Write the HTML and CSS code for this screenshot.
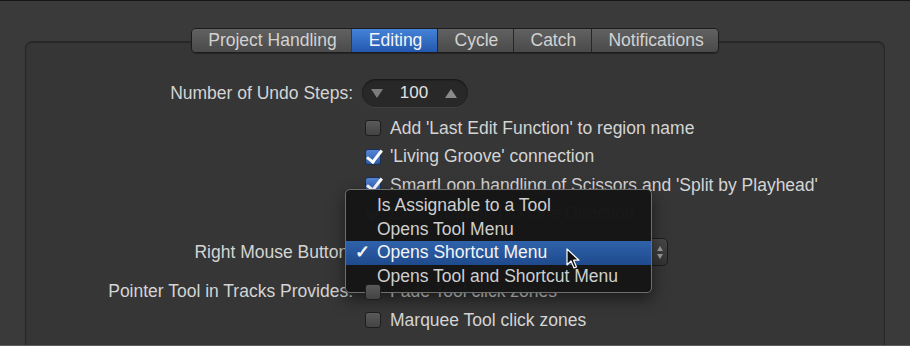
FILE: index.html
```html
<!DOCTYPE html>
<html lang="en">
<head>
    <meta charset="UTF-8">
    <meta name="viewport" content="width=device-width, initial-scale=1.0">
    <title>Preferences - Editing</title>
    <link rel="stylesheet" href="styles.css">
</head>
<body>
    <div class="window">
        <div class="panel">
            <div class="tabs">
                <div class="tab">Project Handling</div>
                <div class="tab active">Editing</div>
                <div class="tab">Cycle</div>
                <div class="tab">Catch</div>
                <div class="tab">Notifications</div>
            </div>

            <div class="form">
                <div class="row row-undo">
                    <div class="label">Number of Undo Steps:</div>
                    <div class="stepper">
                        <span class="tri down"></span>
                        <span class="value">100</span>
                        <span class="tri up"></span>
                    </div>
                </div>

                <div class="row row-first">
                    <div class="label"></div>
                    <label class="check"><span class="box"></span>Add 'Last Edit Function' to region name</label>
                </div>
                <div class="row">
                    <div class="label"></div>
                    <label class="check"><span class="box checked"></span>'Living Groove' connection</label>
                </div>
                <div class="row">
                    <div class="label"></div>
                    <label class="check"><span class="box checked"></span>SmartLoop handling of Scissors and 'Split by Playhead'</label>
                </div>
                <div class="row">
                    <div class="label"></div>
                    <label class="check"><span class="box checked"></span>Limit Dragging to One Direction</label>
                </div>

                <div class="row row-popup">
                    <div class="label">Right Mouse Button:</div>
                    <div class="popup">
                        <span class="popup-text">Opens Shortcut Menu</span>
                        <span class="popup-arrows">
                            <span class="tri up small"></span>
                            <span class="tri down small"></span>
                        </span>

                        <!-- open menu lies over the rows around it -->
                        <ul class="menu">
                            <li>Is Assignable to a Tool</li>
                            <li>Opens Tool Menu</li>
                            <li class="selected">Opens Shortcut Menu</li>
                            <li>Opens Tool and Shortcut Menu</li>
                        </ul>
                        <svg class="cursor" width="14" height="22" viewBox="0 0 14 22">
                            <path d="M1 1 L1 17 L5 13 L8 20 L10.5 19 L7.6 12.2 L13 12.2 Z" fill="#111" stroke="#fff" stroke-width="1.2" stroke-linejoin="round"/>
                        </svg>
                    </div>
                </div>

                <div class="row row-pointer">
                    <div class="label">Pointer Tool in Tracks Provides:</div>
                    <label class="check"><span class="box"></span>Fade Tool click zones</label>
                </div>
                <div class="row">
                    <div class="label"></div>
                    <label class="check"><span class="box"></span>Marquee Tool click zones</label>
                </div>
            </div>
        </div>
    </div>
</body>
</html>
```

FILE: styles.css
```css
* {
    margin: 0;
    padding: 0;
    box-sizing: border-box;
}

html, body {
    height: 100%;
    overflow: hidden;
}

body {
    font-family: 'Liberation Sans', Arial, Helvetica, sans-serif;
    font-size: 17.5px;
    background: #3a3a3a;
    color: #d4d4d4;
}

.window {
    height: 346px;
    padding: 40px 25px 0 25px;
    border-top: 1px solid #161616;
    border-bottom: 1px solid #5c5c5c;
    overflow: hidden;
}

.panel {
    height: 400px;
    background: #363636;
    border: 1px solid #262626;
    border-radius: 7px;
    box-shadow: inset 0 1px 1px rgba(0, 0, 0, 0.25);
    display: flex;
    flex-direction: column;
}

/* tab bar straddles the panel's top edge */
.tabs {
    align-self: center;
    display: flex;
    height: 25px;
    margin-top: -14px;
    border: 1px solid #1c1c1c;
    border-radius: 5px;
    overflow: hidden;
    box-shadow: 0 1px 1px rgba(0, 0, 0, 0.3);
}

.tab {
    padding: 0 14.6px 0 16.6px;
    line-height: 23px;
    color: #d2d2d2;
    background: linear-gradient(#616161, #4a4a4a);
    border-left: 1px solid #262626;
}

.tab:first-child {
    border-left: none;
}

.tab.active {
    color: #f4f4f4;
    background: linear-gradient(#4583d8, #2358ae);
    border-left-color: #1d3d70;
}

.form {
    display: flex;
    flex-direction: column;
    margin-top: 25px;
}

.row {
    display: flex;
    align-items: center;
    height: 28.5px;
}

.row-undo {
    height: 28px;
    margin-top: 1px;
}

.row-first {
    margin-top: 7px;
}

.row-popup {
    height: 28px;
    margin-top: 10px;
}

.row-pointer {
    margin-top: 11.5px;
}

.label {
    width: 327px;
    text-align: right;
    flex-shrink: 0;
}

.stepper {
    margin-left: 9px;
    width: 106px;
    height: 28px;
    border-radius: 14px;
    background: #282828;
    box-shadow: inset 0 1px 2px rgba(0, 0, 0, 0.5), 0 1px 0 rgba(255, 255, 255, 0.05);
    display: flex;
    align-items: center;
    justify-content: space-between;
    padding: 0 11px 0 9px;
    font-size: 17px;
}

.stepper .value {
    color: #e2e2e2;
}

.tri {
    width: 0;
    height: 0;
    border-left: 6px solid transparent;
    border-right: 6px solid transparent;
}

.tri.down {
    border-top: 9px solid #7c7c7c;
}

.tri.up {
    border-bottom: 9px solid #8a8a8a;
}

.tri.small {
    border-left-width: 3.5px;
    border-right-width: 3.5px;
}

.tri.small.up {
    border-bottom: 5px solid #9a9a9a;
}

.tri.small.down {
    border-top: 5px solid #9a9a9a;
}

.check {
    display: flex;
    align-items: center;
    margin-left: 12px;
}

.box {
    width: 16px;
    height: 16px;
    margin-right: 9px;
    border: 1px solid #1e1e1e;
    border-radius: 3px;
    background: linear-gradient(#5a5a5a, #434343);
    position: relative;
    flex-shrink: 0;
}

.box.checked {
    background: linear-gradient(#5485d4, #2d5aa6);
    border-color: #1a2f55;
}

.box.checked::after {
    content: "";
    position: absolute;
    left: 4px;
    top: -3px;
    width: 6px;
    height: 13px;
    border-right: 3px solid #fff;
    border-bottom: 3px solid #fff;
    transform: rotate(38deg);
}

.popup {
    position: relative;
    margin-left: 9px;
    width: 306px;
    height: 28px;
    border: 1px solid #1c1c1c;
    border-radius: 5px;
    background: linear-gradient(#474747, #333333);
    display: flex;
    align-items: center;
    justify-content: space-between;
    padding: 0 4px 0 14px;
}

.popup-arrows {
    display: flex;
    flex-direction: column;
    gap: 3px;
    align-items: center;
}

.menu {
    position: absolute;
    left: -18px;
    top: -50px;
    width: 307px;
    list-style: none;
    padding: 4px 0;
    background: rgba(21, 21, 21, 0.985);
    border: 1px solid #6e6e6e;
    border-radius: 5px;
    box-shadow: 0 6px 16px rgba(0, 0, 0, 0.5);
}

.menu li {
    height: 23.5px;
    line-height: 23.5px;
    padding-left: 31px;
    color: #cfcfcf;
    position: relative;
}

.menu li.selected {
    color: #f4f4f4;
    background: linear-gradient(#2f62ab, #1f4a8d);
}

.menu li.selected::before {
    content: "\2713";
    position: absolute;
    left: 9px;
    font-weight: bold;
}

.cursor {
    position: absolute;
    left: 203px;
    top: 9px;
}
```
